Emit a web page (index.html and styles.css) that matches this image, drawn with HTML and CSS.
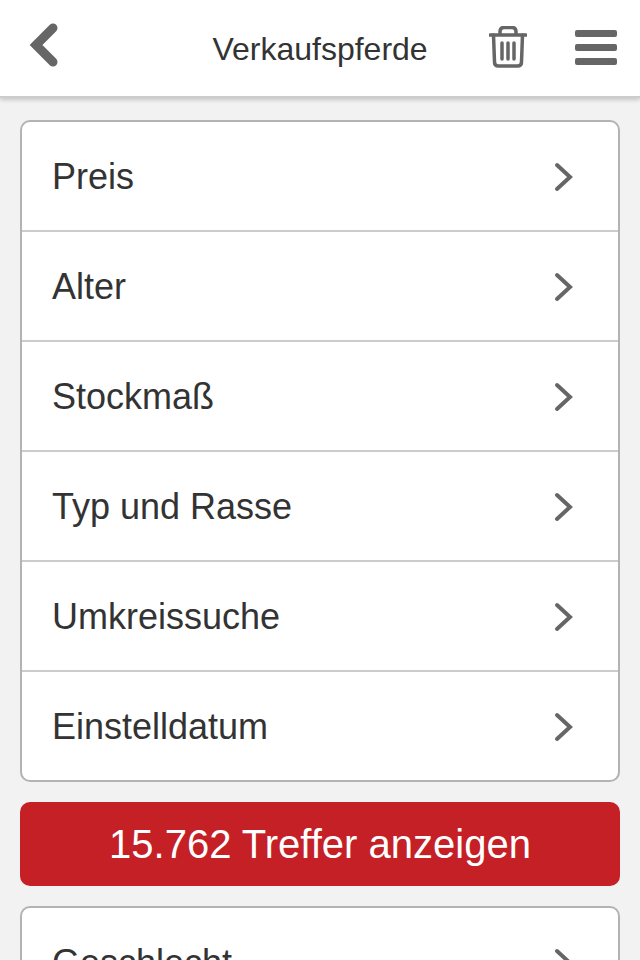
FILE: index.html
```html
<!DOCTYPE html>
<html lang="de">
<head>
<meta charset="utf-8">
<title>Verkaufspferde</title>
<link rel="stylesheet" href="styles.css">
</head>
<body>
<header class="topbar">
  <div class="side">
    <a class="back" aria-label="Zurück">
      <svg width="30" height="44" viewBox="0 0 30 44"><path d="M25 5 L8 22 L25 39" class="stroke-thick"/></svg>
    </a>
  </div>
  <h1 class="title">Verkaufspferde</h1>
  <div class="side side-right">
    <a class="trash" aria-label="Löschen">
      <svg width="38" height="42" viewBox="0 0 38 42">
        <path d="M1 9 H37" class="stroke-med"/>
        <path d="M11 8 V6 Q11 1.500 15 1.500 H23 Q27 1.500 27 6 V8" class="stroke-med"/>
        <path d="M4.500 9 L5.500 36 Q5.500 40 9.500 40 H28.500 Q32.500 40 32.500 36 L33.500 9" class="stroke-med"/>
        <path d="M13 17 V33 M19 17 V33 M25 17 V33" class="stroke-med"/>
      </svg>
    </a>
    <a class="menu" aria-label="Menü"><span></span><span></span><span></span></a>
  </div>
</header>
<main class="content">
  <ul class="card">
    <li class="row"><span class="label">Preis</span><svg class="chev" width="20" height="30" viewBox="0 0 20 30"><path d="M3 3 L16 15 L3 27"/></svg></li>
    <li class="row"><span class="label">Alter</span><svg class="chev" width="20" height="30" viewBox="0 0 20 30"><path d="M3 3 L16 15 L3 27"/></svg></li>
    <li class="row"><span class="label">Stockmaß</span><svg class="chev" width="20" height="30" viewBox="0 0 20 30"><path d="M3 3 L16 15 L3 27"/></svg></li>
    <li class="row"><span class="label">Typ und Rasse</span><svg class="chev" width="20" height="30" viewBox="0 0 20 30"><path d="M3 3 L16 15 L3 27"/></svg></li>
    <li class="row"><span class="label">Umkreissuche</span><svg class="chev" width="20" height="30" viewBox="0 0 20 30"><path d="M3 3 L16 15 L3 27"/></svg></li>
    <li class="row"><span class="label">Einstelldatum</span><svg class="chev" width="20" height="30" viewBox="0 0 20 30"><path d="M3 3 L16 15 L3 27"/></svg></li>
  </ul>
  <button class="submit">15.762 Treffer anzeigen</button>
  <ul class="card">
    <li class="row"><span class="label">Geschlecht</span><svg class="chev" width="20" height="30" viewBox="0 0 20 30"><path d="M3 3 L16 15 L3 27"/></svg></li>
  </ul>
</main>
</body>
</html>
```
FILE: styles.css
```css
* { box-sizing: border-box; }
html, body { margin: 0; height: 960px; overflow: hidden; }
body { background: #f2f2f2; font-family: "Liberation Sans", Arial, sans-serif; color: #333; }
.topbar {
  height: 98px;
  background: #fff;
  border-bottom: 2px solid #ccc;
  box-shadow: 0 2px 4px rgba(0,0,0,.18);
  display: grid;
  grid-template-columns: 1fr auto 1fr;
  align-items: center;
  padding: 0 23px;
}
.side { display: flex; align-items: center; }
.side-right { justify-content: flex-end; gap: 48px; }
.back { display: flex; width: 30px; margin: -6px 0 0 5px; }
.title { margin: 2px 0 0; text-align: center; font-size: 32px; font-weight: 400; line-height: 36px; }
.trash { display: flex; margin-top: -2px; }
.menu { width: 42px; display: flex; flex-direction: column; gap: 7px; margin-top: -2px; }
.menu span { height: 7px; background: #666; border-radius: 2px; }
svg path { fill: none; stroke: #666; }
.stroke-thick { stroke-width: 9; stroke-linecap: round; stroke-linejoin: miter; }
.stroke-med { stroke-width: 3.500; stroke-linecap: round; stroke-linejoin: round; }
.content { padding: 22px 20px; display: flex; flex-direction: column; gap: 20px; }
.card { list-style: none; margin: 0; padding: 0; background: #fff; border: 2px solid #b3b3b3; border-radius: 10px; overflow: hidden; }
.row { height: 110px; display: flex; align-items: center; justify-content: space-between; padding: 0 44px 0 30px; font-size: 36px; line-height: 40px; border-bottom: 2px solid #ccc; }
.row:last-child { height: 108px; border-bottom: 0; }
.label { margin-top: 2px; }
.chev { flex: none; margin-top: 2px; }
.chev path { stroke-width: 4; stroke-linecap: round; stroke-linejoin: miter; }
.submit { height: 84px; border: 0; border-radius: 10px; background: #c42026; color: #fff; font: 400 40px "Liberation Sans", Arial, sans-serif; padding: 0; }
```
